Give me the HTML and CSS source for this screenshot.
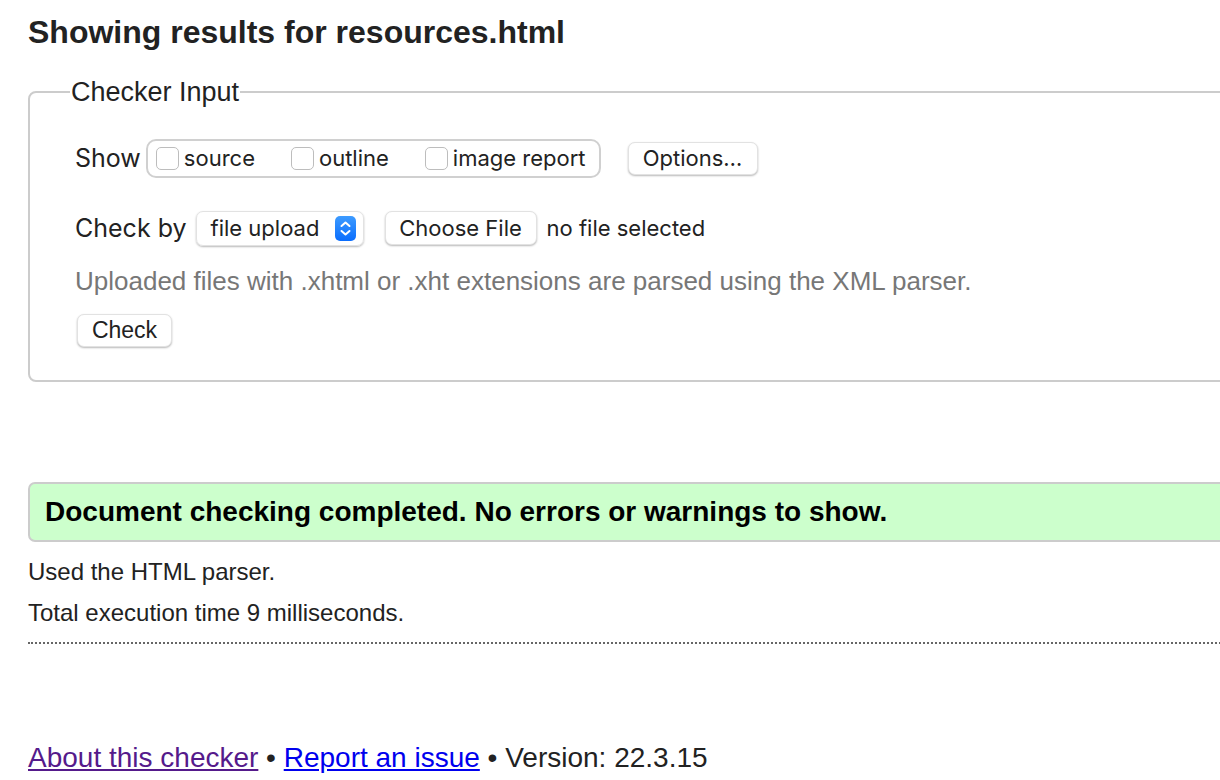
FILE: index.html
```html
<!DOCTYPE html>
<html lang="en">
<head>
<meta charset="utf-8">
<title>Showing results for resources.html - Nu Html Checker</title>
<link rel="stylesheet" href="styles.css">
</head>
<body>
<div class="page">
  <h1 class="title">Showing results for resources.html</h1>
  <fieldset class="checker">
    <legend class="legend">Checker Input</legend>
    <div class="row row-show">
      <span class="label">Show</span>
      <div class="group">
        <label class="opt"><span class="box"></span>source</label>
        <label class="opt"><span class="box"></span>outline</label>
        <label class="opt"><span class="box"></span>image report</label>
      </div>
      <span class="btn btn-options">Options…</span>
    </div>
    <div class="row row-by">
      <span class="label">Check by</span>
      <span class="select">file upload
        <span class="arrow"><svg width="21" height="25" viewBox="0 0 21 25"><path d="M6.5 10 L10.5 6.5 L14.5 10" fill="none" stroke="#fff" stroke-width="2" stroke-linecap="round" stroke-linejoin="round"/><path d="M6.5 15 L10.5 18.5 L14.5 15" fill="none" stroke="#fff" stroke-width="2" stroke-linecap="round" stroke-linejoin="round"/></svg></span>
      </span>
      <span class="btn btn-file">Choose File</span>
      <span class="nofile">no file selected</span>
    </div>
    <p class="help">Uploaded files with .xhtml or .xht extensions are parsed using the XML parser.</p>
    <div class="row row-check">
      <span class="btn btn-check">Check</span>
    </div>
  </fieldset>
  <p class="success">Document checking completed. No errors or warnings to show.</p>
  <p class="info">Used the HTML parser.</p>
  <p class="info info-last">Total execution time 9 milliseconds.</p>
  <p class="footer"><a class="visited" href="#about">About this checker</a> • <a class="link" href="#report">Report an issue</a> • Version: 22.3.15</p>
</div>
</body>
</html>
```
FILE: styles.css
```css
html, body {
  margin: 0;
  padding: 0;
  overflow: hidden;
  background: #fff;
}
body {
  font-family: "Liberation Sans", Arial, sans-serif;
  color: #222;
}
.page {
  width: 1300px;
  padding-left: 28px;
}
.title {
  font-size: 32px;
  line-height: 40px;
  font-weight: bold;
  margin: 12px 0 25px 0;
  color: #222;
}
.checker {
  margin: 0;
  border: 2px solid #ccc;
  border-radius: 8px;
  padding: 0 0 0 45px;
  height: 305px;
  box-sizing: border-box;
}
.legend {
  font-size: 27px;
  line-height: 30px;
  padding: 0 1px;
  margin-left: -5px;
  color: #222;
}
.row {
  display: flex;
  align-items: center;
}
.row-show {
  margin-top: 31px;
  height: 40px;
}
.label {
  font-family: Inter, "Liberation Sans", sans-serif;
  font-size: 25px;
  color: #222;
  margin-right: 8px;
}
.row-show .label {
  margin-right: 5px;
}
.group {
  display: flex;
  align-items: center;
  height: 39px;
  box-sizing: border-box;
  border: 2px solid #d0d0d0;
  border-radius: 10px;
  padding: 0 13px 0 8px;
  margin-right: 27px;
}
.opt {
  display: flex;
  align-items: center;
  font-family: Inter, "Liberation Sans", sans-serif;
  font-size: 22px;
  color: #222;
  margin-right: 36px;
}
.opt:last-child {
  margin-right: 0;
}
.box {
  width: 23px;
  height: 23px;
  box-sizing: border-box;
  border: 1px solid #bdbdbd;
  border-radius: 5px;
  background: #fff;
  margin-right: 5px;
}
.btn {
  display: inline-flex;
  align-items: center;
  justify-content: center;
  font-family: Inter, "Liberation Sans", sans-serif;
  font-size: 22px;
  color: #222;
  background: #fff;
  border-radius: 7px;
  border: 1px solid #e2e2e2;
  box-shadow: 0 1px 2px rgba(0,0,0,0.28);
  box-sizing: border-box;
}
.btn-options {
  width: 130px;
  height: 33px;
}
.row-by {
  margin-top: 32px;
  height: 36px;
}
.row-by .label {
  margin-right: 9px;
}
.select {
  display: inline-flex;
  align-items: center;
  width: 168px;
  height: 35px;
  box-sizing: border-box;
  border-radius: 7px;
  border: 1px solid #e2e2e2;
  box-shadow: 0 1px 2px rgba(0,0,0,0.28);
  padding-left: 14px;
  font-family: Inter, "Liberation Sans", sans-serif;
  font-size: 22px;
  color: #222;
  justify-content: space-between;
  padding-right: 7px;
  margin-right: 21px;
}
.arrow {
  display: block;
  width: 21px;
  height: 25px;
  border-radius: 5px;
  background: linear-gradient(#3d9bff, #0a6dfd);
}
.arrow svg {
  display: block;
}
.btn-file {
  width: 152px;
  height: 34px;
  margin-right: 10px;
}
.nofile {
  font-family: Inter, "Liberation Sans", sans-serif;
  font-size: 22px;
  color: #222;
}
.help {
  margin: 20px 0 0 0;
  font-size: 26px;
  line-height: 30px;
  color: #777;
}
.row-check {
  margin-top: 18px;
}
.btn-check {
  width: 95px;
  height: 33px;
  margin-left: 2px;
  font-family: "Liberation Sans", Arial, sans-serif;
  font-size: 23px;
}
.success {
  margin: 100px 0 0 0;
  height: 60px;
  box-sizing: border-box;
  border: 2px solid #ccc;
  border-radius: 7px;
  background: #cfc;
  padding-left: 15px;
  display: flex;
  align-items: center;
  font-size: 28px;
  font-weight: bold;
  color: #000;
}
.info {
  margin: 15px 0 0 0;
  font-size: 24px;
  line-height: 30px;
  color: #222;
}
.info-last {
  margin-top: 11px;
  padding-bottom: 14px;
  border-bottom: 2px dotted #666;
}
.footer {
  margin: 98px 0 0 0;
  font-size: 28px;
  line-height: 32px;
  color: #222;
}
.footer a {
  text-decoration: underline;
}
.visited {
  color: #551a8b;
}
.link {
  color: #0000ee;
}
```
